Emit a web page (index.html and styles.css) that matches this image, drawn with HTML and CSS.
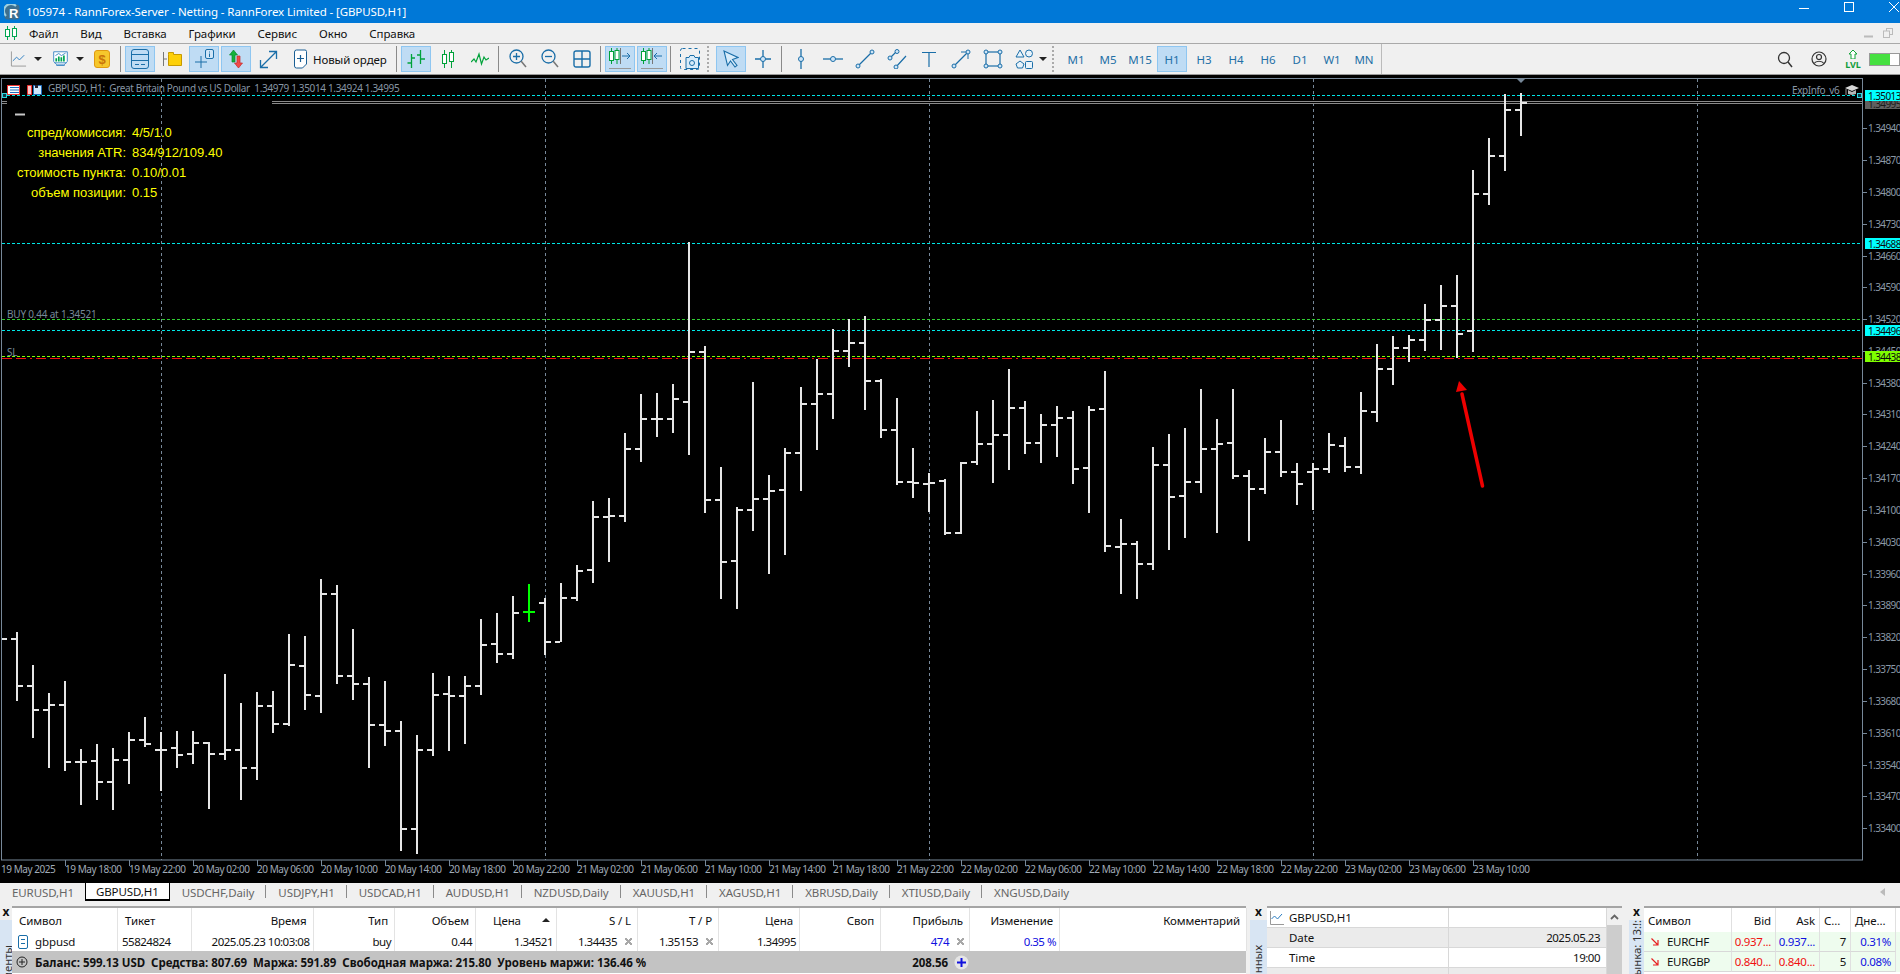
FILE: index.html
```html
<!DOCTYPE html>
<html lang="ru">
<head>
<meta charset="utf-8">
<title>105974 - RannForex-Server - Netting - RannForex Limited - [GBPUSD,H1]</title>
<link rel="stylesheet" href="styles.css">
</head>
<body>
<div class="app">
  <header class="titlebar">
    <svg class="logo" width="16" height="16" viewBox="0 0 16 16"><rect x="0.5" y="0.5" width="15" height="15" rx="3" fill="#3d6f8e"/><path d="M2 12A7 7 0 0 1 12 2" fill="none" stroke="#9fd0e0" stroke-width="2"/><text x="5" y="14" class="logo-r">R</text></svg>
    <span class="title-text">105974 - RannForex-Server - Netting - RannForex Limited - [GBPUSD,H1]</span>
    <div class="winctl">
      <svg width="12" height="12" viewBox="0 0 12 12"><path d="M1 7.5H11" stroke="#fff"/></svg>
      <svg width="12" height="12" viewBox="0 0 12 12"><rect x="1.5" y="1.5" width="9" height="9" fill="none" stroke="#fff"/></svg>
      <svg width="12" height="12" viewBox="0 0 12 12"><path d="M1 1L11 11M11 1L1 11" stroke="#fff"/></svg>
    </div>
  </header>

  <nav class="menubar">
    <svg class="menu-ico" width="14" height="14" viewBox="0 0 14 14"><path d="M3.5 0V14M10.5 0V14" stroke="#00a651"/><rect x="1.5" y="3.5" width="4" height="7" fill="#fff" stroke="#00a651"/><rect x="8.5" y="2.5" width="4" height="8" fill="#fff" stroke="#00a651"/></svg>
    <span>Файл</span><span>Вид</span><span>Вставка</span><span>Графики</span><span>Сервис</span><span>Окно</span><span>Справка</span>
    <div class="mdi">
      <svg width="10" height="10" viewBox="0 0 10 10"><path d="M0 8.5H9" stroke="#bbb" stroke-width="2"/></svg>
      <svg width="10" height="10" viewBox="0 0 10 10"><rect x="3.5" y="0.5" width="6" height="6" fill="none" stroke="#bbb"/><rect x="0.5" y="3" width="6" height="6.5" fill="#f0f0f0" stroke="#bbb"/></svg>
    </div>
  </nav>

  <div class="toolbar">
    <div class="tb tb-drop">
      <svg width="18" height="18" viewBox="0 0 18 18"><path d="M1.5 1V16.5H17" fill="none" stroke="#999"/><path d="M3 11L7 7L10 10L15 5" fill="none" stroke="#2b7cc0"/></svg>
      <i class="caret"></i>
    </div>
    <div class="tb tb-drop">
      <svg width="20" height="20" viewBox="0 0 20 20"><path d="M2 1.5H18V13L14 17H6L2 13Z" fill="#fff" stroke="#2b7cc0"/><path d="M3 14.5H17M5 17.5H15" stroke="#2b7cc0"/><path d="M4 6L8 3.500L11 6L16 3" fill="none" stroke="#2b7cc0"/><path d="M5 13V9M8 13V7M11 13V8M14 13V6" stroke="#00a651" stroke-width="2"/></svg>
      <i class="caret"></i>
    </div>
    <div class="tb">
      <svg width="16" height="18" viewBox="0 0 16 18"><rect x="0.5" y="0.5" width="15" height="17" rx="2.500" fill="#f6c72c" stroke="#e09a12"/><text x="8" y="14" class="dollar">$</text></svg>
    </div>
    <i class="sep"></i>
    <div class="tb on">
      <svg width="18" height="20" viewBox="0 0 18 20"><rect x="0.500" y="0.500" width="17" height="19" rx="2.500" fill="none" stroke="#1a6ea8"/><path d="M0.500 5.500H17.500M0.500 11.500H17.500M4 15.500H8M10 15.500H14" stroke="#1a6ea8"/></svg>
    </div>
    <div class="tb">
      <svg width="20" height="16" viewBox="0 0 20 16"><path d="M1.500 1V15M1.500 8H5" stroke="#777"/><path d="M6.500 3.500V1.500H11.500V3.500H19.500V14.500H6.500Z" fill="#fdd009" stroke="#c79a00"/></svg>
    </div>
    <div class="tb on">
      <svg width="20" height="20" viewBox="0 0 20 20"><path d="M7 7V19M1 13H13" stroke="#1a6ea8"/><rect x="11.500" y="0.500" width="8" height="9" rx="1.500" fill="#cfe5f7" stroke="#1a6ea8"/><path d="M15.500 2.500V3.500M15.500 4.500V8" stroke="#1a6ea8"/></svg>
    </div>
    <div class="tb on">
      <svg width="20" height="20" viewBox="0 0 20 20"><path d="M7.500 1L11.500 6H9V13H6V6H3.500Z" fill="#13b13b" stroke="#0d8a2c" stroke-width="0.700"/><path d="M12.500 19L8.500 14H11V7H14V14H16.500Z" fill="#f04a48" stroke="#c42a2a" stroke-width="0.700"/></svg>
    </div>
    <div class="tb">
      <svg width="19" height="19" viewBox="0 0 19 19"><path d="M1.500 17.500L17.500 1.500M10 1.500H17.500V9M1.500 10V17.500H9" fill="none" stroke="#1a6ea8" stroke-width="1.300"/></svg>
    </div>
    <div class="tb tb-order">
      <svg width="14" height="20" viewBox="0 0 14 20"><path d="M1.500 3A2 2 0 0 1 3.500 1H12A1.500 1.500 0 0 1 13.500 2.500V15L9.500 19H3.500A2 2 0 0 1 1.500 17Z" fill="#fff" stroke="#1a5f95"/><path d="M7.500 6V13M4 9.500H11" stroke="#1a5f95" stroke-width="1.200"/></svg>
      <span>Новый ордер</span>
    </div>
    <i class="sep"></i>
    <div class="tb on">
      <svg width="22" height="20" viewBox="0 0 22 20"><path d="M6.500 5V19M2.500 14H6M7 9H10M15.500 1V15M12 6H15M16 10H20" stroke="#00a23a" stroke-width="1.300"/></svg>
    </div>
    <div class="tb">
      <svg width="14" height="20" viewBox="0 0 14 20"><path d="M3.500 1V19M10.500 1V19" stroke="#00a23a"/><rect x="1.500" y="5.500" width="4" height="9" fill="#fff" stroke="#00a23a"/><rect x="8.500" y="3.500" width="4" height="9" fill="#fff" stroke="#00a23a"/></svg>
    </div>
    <div class="tb">
      <svg width="18" height="14" viewBox="0 0 18 14"><path d="M0 10L3 7L5 10L8 2L10.500 12L13 5L15 8L18 6" fill="none" stroke="#00a23a" stroke-width="1.200"/></svg>
    </div>
    <i class="sep"></i>
    <div class="tb">
      <svg width="18" height="20" viewBox="0 0 18 20"><circle cx="7.500" cy="7.500" r="6.500" fill="none" stroke="#1a6ea8" stroke-width="1.300"/><path d="M12 12L17 18" stroke="#777" stroke-width="1.500"/><path d="M7.500 4V11M4 7.500H11" stroke="#1a6ea8" stroke-width="1.300"/></svg>
    </div>
    <div class="tb">
      <svg width="18" height="20" viewBox="0 0 18 20"><circle cx="7.500" cy="7.500" r="6.500" fill="none" stroke="#1a6ea8" stroke-width="1.300"/><path d="M12 12L17 18" stroke="#777" stroke-width="1.500"/><path d="M4 7.500H11" stroke="#1a6ea8" stroke-width="1.300"/></svg>
    </div>
    <div class="tb">
      <svg width="18" height="18" viewBox="0 0 18 18"><rect x="1" y="1" width="16" height="16" rx="2" fill="none" stroke="#1a6ea8" stroke-width="1.400"/><path d="M9 1V17M1 9H17" stroke="#1a6ea8" stroke-width="1.400"/></svg>
    </div>
    <i class="sep"></i>
    <div class="tb on">
      <svg width="24" height="24" viewBox="0 0 24 24"><path d="M3.500 1V17M9 1V17" stroke="#00a23a"/><rect x="1.500" y="4.500" width="4" height="9" fill="#fff" stroke="#00a23a"/><rect x="7" y="3.500" width="4" height="9" fill="#fff" stroke="#00a23a"/><path d="M12.500 1V17" stroke="#777"/><path d="M14 9H22M19 6L22 9L19 12" fill="none" stroke="#1a6ea8"/><path d="M1 21.500H23" stroke="#999"/></svg>
    </div>
    <div class="tb on">
      <svg width="24" height="24" viewBox="0 0 24 24"><path d="M3.500 1V17M9 1V17" stroke="#00a23a"/><rect x="1.500" y="4.500" width="4" height="9" fill="#fff" stroke="#00a23a"/><rect x="7" y="3.500" width="4" height="9" fill="#fff" stroke="#00a23a"/><path d="M12.500 1V17" stroke="#777"/><path d="M22 9H14M17 6L14 9L17 12" fill="none" stroke="#1a6ea8"/><path d="M1 21.500H23" stroke="#999"/></svg>
    </div>
    <i class="sep"></i>
    <div class="tb">
      <svg width="20" height="22" viewBox="0 0 20 22"><rect x="0.500" y="0.500" width="19" height="21" rx="2" fill="none" stroke="#1a6ea8" stroke-dasharray="3 3"/><path d="M6 9.500H9L10 7.500H14L15 9.500H18.500V20.500H6Z" fill="#d8ecfa" stroke="#1a6ea8"/><circle cx="12" cy="15" r="2.500" fill="none" stroke="#1a6ea8"/></svg>
    </div>
    <i class="grip"></i>
    <div class="tb on">
      <svg width="16" height="18" viewBox="0 0 16 18"><path d="M1 1L15 7.500L9.500 9.500L14 15.500L12 17L7.500 11L4.500 15.500Z" fill="#d8ecfa" stroke="#1a6ea8" stroke-width="1.100"/></svg>
    </div>
    <div class="tb">
      <svg width="18" height="20" viewBox="0 0 18 20"><path d="M9 1V19M1 10H17" stroke="#1a6ea8" stroke-width="1.300"/><circle cx="9" cy="10" r="2.500" fill="#cfe5f7" stroke="#1a6ea8"/></svg>
    </div>
    <i class="sep"></i>
    <div class="tb"><svg width="8" height="20" viewBox="0 0 8 20"><path d="M4 0V20" stroke="#1a6ea8" stroke-width="1.300"/><circle cx="4" cy="10" r="2.500" fill="#cfe5f7" stroke="#1a6ea8"/></svg></div>
    <div class="tb"><svg width="20" height="8" viewBox="0 0 20 8"><path d="M0 4H20" stroke="#1a6ea8" stroke-width="1.300"/><circle cx="10" cy="4" r="2.500" fill="#cfe5f7" stroke="#1a6ea8"/></svg></div>
    <div class="tb"><svg width="20" height="20" viewBox="0 0 20 20"><path d="M3 17L17 3" stroke="#1a6ea8" stroke-width="1.300"/><circle cx="3" cy="17" r="2" fill="#cfe5f7" stroke="#1a6ea8"/><circle cx="17" cy="3" r="2" fill="#cfe5f7" stroke="#1a6ea8"/></svg></div>
    <div class="tb"><svg width="20" height="20" viewBox="0 0 20 20"><path d="M3 9L10 2M9 18L19 7" stroke="#1a6ea8" stroke-width="1.200"/><circle cx="3" cy="9" r="2" fill="#cfe5f7" stroke="#1a6ea8"/><circle cx="10" cy="2.500" r="2" fill="#cfe5f7" stroke="#1a6ea8"/><circle cx="9" cy="18" r="2" fill="#cfe5f7" stroke="#1a6ea8"/></svg></div>
    <div class="tb"><svg width="14" height="16" viewBox="0 0 14 16"><path d="M0 1.500H14M7 1.500V16" stroke="#1a6ea8" stroke-width="1.200"/></svg></div>
    <div class="tb"><svg width="20" height="20" viewBox="0 0 20 20"><path d="M3 17L16 4" stroke="#1a6ea8" stroke-width="1.300"/><path d="M10 3H17V10" fill="none" stroke="#1a6ea8"/><circle cx="3" cy="17" r="2" fill="#cfe5f7" stroke="#1a6ea8"/><circle cx="17" cy="3" r="2" fill="#cfe5f7" stroke="#1a6ea8"/></svg></div>
    <div class="tb"><svg width="20" height="20" viewBox="0 0 20 20"><rect x="3" y="3" width="14" height="14" fill="none" stroke="#1a6ea8" stroke-width="1.200"/><g fill="#cfe5f7" stroke="#1a6ea8"><circle cx="3" cy="3" r="2"/><circle cx="17" cy="3" r="2"/><circle cx="3" cy="17" r="2"/><circle cx="17" cy="17" r="2"/></g></svg></div>
    <div class="tb tb-shapes">
      <svg width="18" height="20" viewBox="0 0 18 20"><g fill="#e8f3fb" stroke="#1a6ea8"><path d="M5 1L9 8H1Z"/><circle cx="14" cy="4.500" r="3.500"/><path d="M5 12L9 15L7.500 19H2.500L1 15Z"/><rect x="10.500" y="12.500" width="7" height="7" rx="1"/></g></svg>
      <i class="caret"></i>
    </div>
    <i class="grip"></i>
    <div class="tf">M1</div><div class="tf">M5</div><div class="tf">M15</div><div class="tf on">H1</div><div class="tf">H3</div><div class="tf">H4</div><div class="tf">H6</div><div class="tf">D1</div><div class="tf">W1</div><div class="tf">MN</div>
    <i class="sep sep-tall"></i>
    <div class="tb-right">
      <div class="tb"><svg width="16" height="17" viewBox="0 0 16 17"><circle cx="7" cy="7" r="5.500" fill="none" stroke="#333" stroke-width="1.300"/><path d="M11 11L15 16" stroke="#333" stroke-width="1.500"/></svg></div>
      <div class="tb"><svg width="16" height="16" viewBox="0 0 16 16"><circle cx="8" cy="8" r="7" fill="none" stroke="#333" stroke-width="1.200"/><circle cx="8" cy="6" r="2.500" fill="none" stroke="#333" stroke-width="1.200"/><path d="M3 12.500C5 9.500 11 9.500 13 12.500" fill="none" stroke="#333" stroke-width="1.200"/></svg></div>
      <div class="tb lvl">
        <svg width="10" height="9" viewBox="0 0 10 9"><path d="M5 0L9 4H7V9H3V4H1Z" fill="#fff" stroke="#13a538"/></svg>
        <span>LVL</span>
      </div>
      <div class="toggle"><i></i></div>
    </div>
  </div>

  <svg class="chart" width="1900" height="807" viewBox="0 75 1900 807">
    <rect x="1.500" y="78.500" width="1861" height="781.500" fill="none" stroke="#778899"/>
    <g class="vgrid">
      <path d="M161.500 79V860M545.500 79V860M929.500 79V860M1313.500 79V860M1697.500 79V860"/>
    </g>
    <g class="hline-group">
      <path class="dash cyan" d="M2 95.500H1862M2 243.500H1862M2 330.500H1862"/>
      <path class="dash grn" d="M2 319.500H1862"/>
      <path class="dash lime" d="M2 356.500H1862"/>
      <path class="dash redline" d="M2 358.500H1862"/>
      <path class="solid-gray" d="M272 101.500H1862M272 103.500H1862M2 101.500H7M2 103.500H7"/>
    </g>
    <path class="bars" d="M2 639h5M17 632V701M11 639h5M18 686h5M33 665V738M27 686h5M34 710h5M49 693V768M43 710h5M50 705h5M65 681V771M59 705h5M66 762h5M81 749V805M75 762h5M82 762h5M97 744V800M91 761h5M98 782h5M113 748V810M107 782h5M114 760h5M129 732V784M123 760h5M130 740h5M145 717V747M139 740h5M146 744h5M161 732V791M155 750h5M162 750h5M177 731V768M171 748h5M178 755h5M193 731V764M187 754h5M194 743h5M209 742V809M203 743h5M210 754h5M225 674V760M219 754h5M226 750h5M241 703V800M235 750h5M242 768h5M257 692V780M251 768h5M258 706h5M273 691V733M267 706h5M274 724h5M289 634V726M283 724h5M290 665h5M305 636V710M299 666h5M306 695h5M321 579V713M315 696h5M322 594h5M337 585V684M331 594h5M338 676h5M353 629V700M347 676h5M354 684h5M369 677V768M363 684h5M370 725h5M385 681V746M379 725h5M386 731h5M401 721V851M395 731h5M402 829h5M417 735V854M411 829h5M418 750h5M433 673V756M427 750h5M434 695h5M449 676V751M443 694h5M450 696h5M465 676V744M459 696h5M466 686h5M481 619V695M475 686h5M482 645h5M497 613V663M491 644h5M498 654h5M513 596V659M507 654h5M514 613h5M545 598V655M539 603h5M546 642h5M561 583V642M555 642h5M562 598h5M577 565V601M571 598h5M578 571h5M593 501V583M587 570h5M594 517h5M609 498V562M603 517h5M610 516h5M625 433V522M619 516h5M626 449h5M641 394V462M635 449h5M642 419h5M657 393V437M651 419h5M658 419h5M673 384V433M667 419h5M674 399h5M689 242V455M683 402h5M690 352h5M705 346V513M699 352h5M706 500h5M721 467V599M715 500h5M722 562h5M737 507V609M731 561h5M738 510h5M753 382V531M747 510h5M754 499h5M769 475V574M763 499h5M770 491h5M785 448V555M779 490h5M786 453h5M801 387V491M795 453h5M802 404h5M817 359V450M811 404h5M818 394h5M833 329V419M827 394h5M834 351h5M849 319V367M843 351h5M850 343h5M865 316V410M859 343h5M866 381h5M881 379V438M875 381h5M882 430h5M897 398V485M891 430h5M898 482h5M913 448V498M907 482h5M914 483h5M929 473V512M923 484h5M930 483h5M945 479V535M939 481h5M946 533h5M961 462V534M955 533h5M962 463h5M977 411V465M971 462h5M978 444h5M993 400V483M987 444h5M994 435h5M1009 369V470M1003 435h5M1010 408h5M1025 401V454M1019 408h5M1026 443h5M1041 414V463M1035 443h5M1042 425h5M1057 406V457M1051 425h5M1058 418h5M1073 411V484M1067 418h5M1074 469h5M1089 406V513M1083 468h5M1090 410h5M1105 371V552M1099 409h5M1106 546h5M1121 519V594M1115 547h5M1122 544h5M1137 541V599M1131 544h5M1138 564h5M1153 447V570M1147 564h5M1154 465h5M1169 434V550M1163 465h5M1170 497h5M1185 428V538M1179 496h5M1186 482h5M1201 389V493M1195 482h5M1202 449h5M1217 419V533M1211 449h5M1218 444h5M1233 389V479M1227 443h5M1234 476h5M1249 470V541M1243 476h5M1250 489h5M1265 438V494M1259 489h5M1266 452h5M1281 420V477M1275 452h5M1282 472h5M1297 463V505M1291 472h5M1298 484h5M1313 463V510M1307 472h5M1314 469h5M1329 433V473M1323 469h5M1330 445h5M1345 437V472M1339 446h5M1346 467h5M1361 392V474M1355 467h5M1362 411h5M1377 344V422M1371 412h5M1378 369h5M1393 336V385M1387 369h5M1394 348h5M1409 335V362M1403 348h5M1410 340h5M1425 304V351M1419 340h5M1426 320h5M1441 285V350M1435 320h5M1442 306h5M1457 275V358M1451 306h5M1458 334h5M1473 170V352M1467 331h5M1474 194h5M1489 138V205M1483 194h5M1490 156h5M1505 94V171M1499 156h5M1506 110h5M1521 93V136M1515 110h5M1522 103h5"/>
    <path class="bar-green" d="M529 584V622M523 612H535"/>

    <g class="arrow">
      <path d="M1482.500 486L1462 394" stroke="#ee0000" stroke-width="3.500" stroke-linecap="round"/>
      <path d="M1459 381L1467 390L1456 392Z" fill="#ee0000"/>
    </g>
    <path class="top-mark" d="M1516 78H1526L1521 83Z"/>

    <g class="mini-ico">
      <rect x="7.500" y="85.500" width="12" height="9" fill="#fff" stroke="#e33"/>
      <path d="M10 87.500H19M10 90H19M10 92.500H19" stroke="#1f6fc0"/>
      <path d="M27.500 85.500H31.500V94.500H27.500Z" fill="#f8c8c8" stroke="#e33"/>
      <path d="M33.500 85.500H41.500V94.500H33.500Z" fill="#cfe8fb" stroke="#1f6fc0"/>
      <rect x="35" y="85" width="3" height="3" fill="#223"/>
    </g>
    <rect class="cy-sq" x="2.500" y="93.500" width="4" height="4"/>
    <rect class="cy-sq" x="1857.500" y="93.500" width="4" height="4"/>
    <text class="t-legend" x="48" y="92">GBPUSD, H1:  Great Britain Pound vs US Dollar  1.34979 1.35014 1.34924 1.34995</text>
    <path class="dash-mark" d="M15 114.500H25"/>
    <g class="yellow">
      <text x="126" y="137" class="end">спред/комиссия:</text><text x="132" y="137">4/5/1.0</text>
      <text x="126" y="157" class="end">значения ATR:</text><text x="132" y="157">834/912/109.40</text>
      <text x="126" y="177" class="end">стоимость пункта:</text><text x="132" y="177">0.10/0.01</text>
      <text x="126" y="197" class="end">объем позиции:</text><text x="132" y="197">0.15</text>
    </g>
    <text class="t-obj" x="7" y="318">BUY 0.44 at 1.34521</text>
    <text class="t-obj" x="7" y="356">SL</text>
    <text class="t-exp" x="1792" y="94">ExpInfo_v6</text>
    <g class="cap">
      <path d="M1845 88L1852 85L1859 88L1852 91Z" fill="#d8d8d8"/>
      <path d="M1848 90V94L1852 95L1856 94V90L1852 92Z" fill="#b8b8b8"/>
      <path d="M1846 89V95" stroke="#999"/>
    </g>

    <path class="axis-ticks" d="M1862 128.500h5M1862 160.500h5M1862 192.500h5M1862 224.500h5M1862 256.500h5M1862 287.500h5M1862 319.500h5M1862 351.500h5M1862 383.500h5M1862 414.500h5M1862 446.500h5M1862 478.500h5M1862 510.500h5M1862 542.500h5M1862 574.500h5M1862 605.500h5M1862 637.500h5M1862 669.500h5M1862 701.500h5M1862 733.500h5M1862 765.500h5M1862 796.500h5M1862 828.500h5"/>
    <g class="t-price">
      <text x="1868" y="132">1.34940</text><text x="1868" y="164">1.34870</text><text x="1868" y="196">1.34800</text><text x="1868" y="228">1.34730</text><text x="1868" y="260">1.34660</text><text x="1868" y="291">1.34590</text><text x="1868" y="323">1.34520</text><text x="1868" y="355">1.34450</text><text x="1868" y="387">1.34380</text><text x="1868" y="418">1.34310</text><text x="1868" y="450">1.34240</text><text x="1868" y="482">1.34170</text><text x="1868" y="514">1.34100</text><text x="1868" y="546">1.34030</text><text x="1868" y="578">1.33960</text><text x="1868" y="609">1.33890</text><text x="1868" y="641">1.33820</text><text x="1868" y="673">1.33750</text><text x="1868" y="705">1.33680</text><text x="1868" y="737">1.33610</text><text x="1868" y="769">1.33540</text><text x="1868" y="800">1.33470</text><text x="1868" y="832">1.33400</text>
    </g>
    <g class="tags">
      <rect class="tag-gray" x="1865" y="100" width="35" height="9"/><text class="under" x="1868" y="108">1.34995</text>
      <rect class="tag-cyan" x="1865" y="90" width="35" height="11"/><text x="1868" y="100">1.35013</text>
      <rect class="tag-cyan" x="1865" y="238" width="35" height="11"/><text x="1868" y="248">1.34688</text>
      <rect class="tag-cyan" x="1865" y="325" width="35" height="11"/><text x="1868" y="335">1.34496</text>
      <rect class="tag-lime" x="1865" y="351" width="35" height="11"/><text x="1868" y="361">1.34438</text>
    </g>
    <path class="axis-ticks" d="M65.500 860v6M129.500 860v6M193.500 860v6M257.500 860v6M321.500 860v6M385.500 860v6M449.500 860v6M513.500 860v6M577.500 860v6M641.500 860v6M705.500 860v6M769.500 860v6M833.500 860v6M897.500 860v6M961.500 860v6M1025.500 860v6M1089.500 860v6M1153.500 860v6M1217.500 860v6M1281.500 860v6M1345.500 860v6M1409.500 860v6M1473.500 860v6"/>
    <g class="t-time">
      <text x="1" y="873">19 May 2025</text><text x="65" y="873">19 May 18:00</text><text x="129" y="873">19 May 22:00</text><text x="193" y="873">20 May 02:00</text><text x="257" y="873">20 May 06:00</text><text x="321" y="873">20 May 10:00</text><text x="385" y="873">20 May 14:00</text><text x="449" y="873">20 May 18:00</text><text x="513" y="873">20 May 22:00</text><text x="577" y="873">21 May 02:00</text><text x="641" y="873">21 May 06:00</text><text x="705" y="873">21 May 10:00</text><text x="769" y="873">21 May 14:00</text><text x="833" y="873">21 May 18:00</text><text x="897" y="873">21 May 22:00</text><text x="961" y="873">22 May 02:00</text><text x="1025" y="873">22 May 06:00</text><text x="1089" y="873">22 May 10:00</text><text x="1153" y="873">22 May 14:00</text><text x="1217" y="873">22 May 18:00</text><text x="1281" y="873">22 May 22:00</text><text x="1345" y="873">23 May 02:00</text><text x="1409" y="873">23 May 06:00</text><text x="1473" y="873">23 May 10:00</text>
    </g>
  </svg>

  <div class="tabs">
    <span class="tab">EURUSD,H1</span>
    <span class="tab tab-on">GBPUSD,H1</span>
    <span class="tab">USDCHF,Daily</span><i></i>
    <span class="tab">USDJPY,H1</span><i></i>
    <span class="tab">USDCAD,H1</span><i></i>
    <span class="tab">AUDUSD,H1</span><i></i>
    <span class="tab">NZDUSD,Daily</span><i></i>
    <span class="tab">XAUUSD,H1</span><i></i>
    <span class="tab">XAGUSD,H1</span><i></i>
    <span class="tab">XBRUSD,Daily</span><i></i>
    <span class="tab">XTIUSD,Daily</span><i></i>
    <span class="tab">XNGUSD,Daily</span>
    <svg class="tab-arrow" width="5" height="8" viewBox="0 0 5 8"><path d="M5 0V8L0 4Z" fill="#bbb"/></svg>
  </div>

  <div class="docks">
    <section class="dock dock-trade">
      <div class="strip"><b>x</b><div class="strip-tab"><span>Инструменты</span></div></div>
      <div class="trade">
        <div class="trade-cols trade-head">
          <span class="left p7">Символ</span><span class="left p7">Тикет</span><span>Время</span><span>Тип</span><span>Объем</span>
          <span class="left sort">Цена<i class="caret caret-up"></i></span><span>S / L</span><span>T / P</span><span>Цена</span><span>Своп</span><span>Прибыль</span><span>Изменение</span><span>Комментарий</span>
        </div>
        <div class="trade-cols trade-row">
          <span class="left sym"><svg width="10" height="14" viewBox="0 0 10 14"><rect x="0.500" y="0.500" width="9" height="13" rx="1.500" fill="#fff" stroke="#1a6ea8"/><path d="M3 4.500H7M3 8.500H7" stroke="#1a6ea8"/></svg>gbpusd</span>
          <span class="left p4">55824824</span><span class="p4r">2025.05.23 10:03:08</span><span class="p4r">buy</span><span class="p4r">0.44</span><span class="p4r">1.34521</span>
          <span class="withx">1.34435<i class="x"></i></span><span class="withx">1.35153<i class="x"></i></span><span class="p4r">1.34995</span><span></span>
          <span class="withx blue">474<i class="x"></i></span><span class="p4r blue">0.35 %</span><span></span>
        </div>
        <div class="trade-foot">
          <svg width="12" height="12" viewBox="0 0 12 12"><circle cx="6" cy="6" r="5" fill="none" stroke="#222"/><path d="M3 6H9M6 3V9" stroke="#222"/></svg>
          <b class="foot-text">Баланс: 599.13 USD&nbsp; Средства: 807.69&nbsp; Маржа: 591.89&nbsp; Свободная маржа: 215.80&nbsp; Уровень маржи: 136.46 %</b>
          <b class="foot-sum">208.56</b>
          <svg class="foot-plus" width="15" height="15" viewBox="0 0 15 15"><circle cx="7.500" cy="7.500" r="7" fill="#e6e6e6"/><path d="M3 7.500H12M7.500 3V12" stroke="#1212dd" stroke-width="2"/></svg>
        </div>
      </div>
    </section>

    <section class="dock dock-data">
      <div class="strip"><b>x</b><div class="strip-tab"><span>Окно данных</span></div></div>
      <div class="data">
        <div class="data-row data-head"><span class="dn"><svg width="14" height="14" viewBox="0 0 14 14"><path d="M0.500 0V13.500H14" fill="none" stroke="#999"/><path d="M1.500 8L4.500 5L7.500 8L12 3" fill="none" stroke="#2b7cc0"/></svg>GBPUSD,H1</span><span></span></div>
        <div class="data-row odd"><span class="dn pad">Date</span><span class="dv">2025.05.23</span></div>
        <div class="data-row"><span class="dn pad">Time</span><span class="dv">19:00</span></div>
        <div class="data-row odd"><span class="dn pad">Open</span><span class="dv"></span></div>
      </div>
      <div class="scroll"><div class="scroll-btn"><svg width="9" height="6" viewBox="0 0 9 6"><path d="M1 5L4.500 1.500L8 5" fill="none" stroke="#666" stroke-width="1.800"/></svg></div><div class="scroll-thumb"></div></div>
    </section>

    <section class="dock dock-market">
      <div class="strip"><b>x</b><div class="strip-tab"><span>Обзор рынка: 13:!:</span></div></div>
      <div class="market">
        <div class="market-cols market-head"><span class="left">Символ</span><span>Bid</span><span>Ask</span><span class="left">С...</span><span class="left">Дне...</span></div>
        <div class="market-cols market-row">
          <span class="left mk-sym"><svg width="8" height="8" viewBox="0 0 8 8"><path d="M0.500 0.500L7 7M7 2V7H2" fill="none" stroke="#e62020" stroke-width="1.200"/></svg>EURCHF</span><span class="txt-red">0.937...</span><span class="blue">0.937...</span><span>7</span><span class="blue">0.31%</span>
        </div>
        <div class="market-cols market-row">
          <span class="left mk-sym"><svg width="8" height="8" viewBox="0 0 8 8"><path d="M0.500 0.500L7 7M7 2V7H2" fill="none" stroke="#e62020" stroke-width="1.200"/></svg>EURGBP</span><span class="txt-red">0.840...</span><span class="txt-red">0.840...</span><span>5</span><span class="blue">0.08%</span>
        </div>
      </div>
    </section>
  </div>
</div>
</body>
</html>
```

FILE: styles.css
```css
* { box-sizing: border-box; }
html, body { margin: 0; padding: 0; background: #f0f0f0; overflow: hidden; }
body { font: 11.5px "Noto Sans", "Liberation Sans", sans-serif; letter-spacing: -0.1px; color: #111; }
i { display: block; font-style: normal; }

.app { width: 1900px; height: 974px; display: flex; flex-direction: column; overflow: hidden; }

/* Title bar */
.titlebar { height: 23px; background: #0078d7; color: #fff; display: flex; align-items: center; flex: none; padding-left: 4px; }
.logo { flex: none; }
.logo-r { font: bold 13px "Liberation Sans", sans-serif; fill: #fff; }
.title-text { margin-left: 6px; }
.winctl { margin-left: auto; display: flex; gap: 33px; align-self: flex-start; padding-top: 1px; }

/* Menu */
.menubar { height: 21px; background: #f0f0f0; border-bottom: 1px solid #a9a9a9; display: flex; align-items: center; gap: 22px; flex: none; padding-left: 4px; }
.menu-ico { margin-right: -11px; }
.mdi { margin-left: auto; display: flex; gap: 9px; padding-right: 7px; }

/* Toolbar */
.toolbar { height: 31px; background: #f0f0f0; border-bottom: 1px solid #9a9a9a; display: flex; align-items: center; gap: 2px; flex: none; padding-left: 3px; }
.tb { width: 30px; height: 26px; display: flex; align-items: center; justify-content: center; flex: none; border: 1px solid transparent; }
.tb.on, .tf.on { background: #bfdcf4; border: 1px solid #8ec6f1; }
.tb-drop { width: 40px; justify-content: flex-start; padding-left: 6px; gap: 7px; }
.tb-order { width: 108px; justify-content: flex-start; padding-left: 7px; gap: 6px; white-space: nowrap; }
.tb-shapes { width: 40px; justify-content: flex-start; padding-left: 4px; gap: 6px; }
.caret { width: 0; height: 0; border-left: 4px solid transparent; border-right: 4px solid transparent; border-top: 4px solid #222; }
.caret-up { border-top: 0; border-bottom: 4px solid #222; }
.sep { width: 1px; height: 26px; background: #8a8a8a; margin: 0 2px 0 1px; flex: none; }
.sep-tall { height: 30px; background: #bbb; margin: 0; }
.grip { width: 4px; height: 26px; flex: none; margin: 0 3px 0 0; background: radial-gradient(circle at 1px 1px, #aaa 1px, transparent 1.2px) 0 0 / 4px 4px; }
.tf { width: 30px; height: 26px; display: flex; align-items: center; justify-content: center; color: #236fa6; flex: none; }
.tb-right { margin-left: auto; display: flex; align-items: center; gap: 4px; }
.tb-right .tb { border: 0; }
.tb-right .lvl { flex-direction: column; color: #0f9d3a; font-size: 9px; font-weight: 700; line-height: 9px; gap: 1px; margin-right: -3px; }
.toggle { width: 31px; height: 13px; border: 1px solid #999; background: #fff; }
.toggle i { width: 20px; height: 100%; background: #46e040; }
.dollar { font: bold 13px "Liberation Sans", sans-serif; fill: #c9730a; text-anchor: middle; }

/* Chart */
.chart { display: block; flex: none; background: #000; }
.chart text { white-space: pre; font-family: "Noto Sans", "Liberation Sans", sans-serif; letter-spacing: 0; }
.vgrid path { stroke: #778899; fill: none; stroke-dasharray: 3 3; }
.dash { fill: none; stroke-width: 1; }
.cyan { stroke: #00e6e6; stroke-dasharray: 3 2; }
.grn { stroke: #32cd32; stroke-dasharray: 3 2; }
.lime { stroke: #7fff00; stroke-dasharray: 3 2; }
.redline { stroke: #f01010; stroke-dasharray: 10 4 10 4 2 4; }
.solid-gray { stroke: #8a8a8a; fill: none; }
.bars { stroke: #e6e6e6; stroke-width: 2; fill: none; shape-rendering: crispEdges; }
.bar-green { stroke: #00ff00; stroke-width: 2; fill: none; shape-rendering: crispEdges; }
.top-mark { fill: #778899; }
.cy-sq { fill: #0a3c4a; stroke: #2fd7e0; }
.chart .t-legend { font-size: 10px; fill: #8796a5; letter-spacing: -0.35px; }
.dash-mark { stroke: #c8c8c8; stroke-width: 2; }
.chart .yellow text { font-family: "Liberation Sans", sans-serif; font-size: 13px; fill: #ffff00; }
.yellow text.end { text-anchor: end; }
.chart .t-obj { font-size: 10px; fill: #778899; letter-spacing: -0.2px; }
.chart .t-exp { font-size: 10px; fill: #8796a5; letter-spacing: -0.4px; }
.axis-ticks { stroke: #778899; fill: none; }
.chart .t-price text { font-size: 10px; fill: #8a98a6; letter-spacing: -0.6px; }
.chart .t-time text { font-size: 10px; fill: #a0acb8; letter-spacing: -0.45px; }
.chart .tags text { font-size: 10px; fill: #0a0a0a; letter-spacing: -0.6px; }
.chart .tags text.under { fill: #1c1c1c; }
.tag-cyan { fill: #00ffff; }
.tag-lime { fill: #7fff00; }
.tag-gray { fill: #606060; }

/* Tabs */
.tabs { height: 19px; flex: none; display: flex; align-items: stretch; background: #f0f0f0; border-top: 1px solid #000; padding-left: 12px; }
.tabs > i { width: 1px; background: #8a8a8a; margin: 2px 0 3px; }
.tab { padding: 0 11px 0 12px; color: #666; display: flex; align-items: center; }
.tab:first-child { padding: 0 11px 0 0; }
.tab-on { background: #fff; color: #111; border: 1px solid #000; border-width: 0 1px 2px 1px; padding: 0 10px 0 10px; }
.tab-arrow { margin: 5px 15px 0 auto; }

/* Docks */
.docks { flex: 1; display: flex; min-height: 0; padding-top: 5px; background: #f0f0f0; }
.dock { display: flex; min-height: 0; overflow: hidden; }
.dock-trade { width: 1250px; }
.dock-data { width: 379px; }
.dock-market { width: 271px; }
.strip { flex: none; width: 15px; display: flex; flex-direction: column; }
.strip b { height: 14px; text-align: center; line-height: 12px; font-size: 12px; }
.strip-tab { flex: 1; background: #d8e5f3; padding-top: 25px; overflow: hidden; }
.strip-tab span { writing-mode: vertical-rl; transform: rotate(180deg); display: block; white-space: nowrap; color: #333; }
.dock-trade .strip { width: 12px; }
.dock-data .strip { width: 17px; }
.dock-market .strip-tab { padding-top: 0; }

.left { text-align: left !important; justify-content: flex-start !important; }
.blue { color: #0f10e0; }
.txt-red { color: #f01010; }

.trade { width: 1234px; flex: none; border-top: 2px solid #a5a5a5; background: #fff; display: flex; flex-direction: column; }
.trade-cols { display: grid; grid-template-columns: 106px 74px 121.5px 81.5px 81px 81px 81px 81px 81px 81px 89px 90px 187px; }
.trade-cols > span { display: flex; align-items: center; justify-content: flex-end; border-right: 1px solid #e3e3e3; padding-right: 6px; white-space: nowrap; overflow: hidden; }
.trade-head { height: 24px; }
.trade-row { height: 19px; letter-spacing: -0.5px; }
.trade-row .sym { letter-spacing: -0.1px; }
.p7 { padding-left: 7px; }
.p4 { padding-left: 4px; }
.trade-cols > .p4r { padding-right: 3px; }
.sort { padding-left: 17px; gap: 21px; }
.sym { padding-left: 6px; gap: 7px; }
.trade-cols > .withx { padding-right: 5px; gap: 8px; }
.x { width: 7px; height: 7px; background: linear-gradient(45deg, transparent 42%, #a8a8a8 42%, #a8a8a8 58%, transparent 58%), linear-gradient(-45deg, transparent 42%, #a8a8a8 42%, #a8a8a8 58%, transparent 58%); flex: none; }
.trade-foot { height: 22px; background: #c3c3c3; display: flex; align-items: center; padding-left: 4px; letter-spacing: -0.03px; }
.foot-text { margin-left: 7px; white-space: nowrap; }
.foot-sum { margin-left: 266px; }
.foot-plus { margin-left: 6px; }

.data { width: 340px; flex: none; border-top: 2px solid #a5a5a5; background: #fff; }
.data-row { height: 20px; display: grid; grid-template-columns: 182px 158px; border-bottom: 1px solid #d8d8d8; }
.data-row.odd { background: #ebebeb; }
.data-row > span { display: flex; align-items: center; border-right: 1px solid #d8d8d8; }
.dn { padding-left: 3px; gap: 5px; }
.dn.pad { padding-left: 22px; }
.dv { justify-content: flex-end; padding-right: 6px; letter-spacing: -0.5px; }
.scroll { width: 15px; flex: none; display: flex; flex-direction: column; background: #f0f0f0; border-top: 2px solid #a5a5a5; }
.scroll-btn { height: 17px; display: flex; align-items: center; justify-content: center; }
.scroll-thumb { flex: 1; background: #cdcdcd; }

.market { flex: 1; border-top: 2px solid #a5a5a5; background: #fff; }
.market-cols { display: grid; grid-template-columns: 88px 44px 44px 31px 45px 4px; }
.market-cols > span { display: flex; align-items: center; justify-content: flex-end; border-right: 1px solid #e0e0e0; padding: 0 4px; white-space: nowrap; overflow: hidden; }
.market-head { height: 24px; }
.market-row { height: 20px; background: #eefcee; letter-spacing: -0.3px; }
.market-row > span { border-bottom: 1px solid #d8d8d8; }
.mk-sym { padding-left: 7px !important; gap: 8px; }
```
